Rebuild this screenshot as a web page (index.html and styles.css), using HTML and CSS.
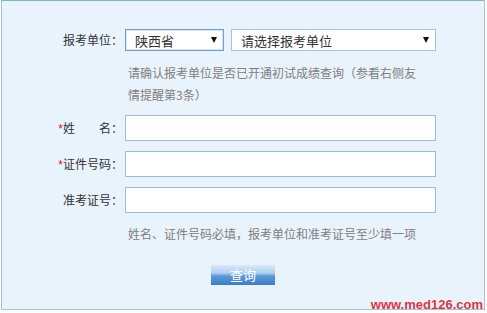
FILE: index.html
```html
<!DOCTYPE html>
<html lang="zh-CN">
<head>
  <meta charset="UTF-8">
  <title>成绩查询</title>
  <link rel="stylesheet" href="styles.css">
</head>
<body>
  <div class="box">
    <form class="query">
      <div class="row row-unit">
        <label class="label">报考单位：</label>
        <div class="field">
          <span class="sel sel-prov">
            <select>
              <option>陕西省</option>
            </select>
          </span>
          <span class="sel sel-unit">
            <select>
              <option>请选择报考单位</option>
            </select>
          </span>
        </div>
      </div>
      <p class="tip tip-unit">请确认报考单位是否已开通初试成绩查询（参看右侧友情提醒第3条）</p>

      <div class="row">
        <label class="label"><em>*</em>姓　　名：</label>
        <input class="text" type="text">
      </div>
      <div class="row">
        <label class="label"><em>*</em>证件号码：</label>
        <input class="text" type="text">
      </div>
      <div class="row">
        <label class="label">准考证号：</label>
        <input class="text" type="text">
      </div>
      <p class="tip tip-need">姓名、证件号码必填，报考单位和准考证号至少填一项</p>

      <div class="actions">
        <button type="button" class="btn">查询</button>
      </div>
    </form>
    <span class="mark">www.med126.com</span>
  </div>
</body>
</html>
```

FILE: styles.css
```css
body { margin: 0; font-family: "Noto Sans CJK SC", "Liberation Sans", sans-serif; font-size: 12px; color: #333; background: #fff; }

.box { position: relative; box-sizing: border-box; width: 484px; height: 310px; margin-left: 1px; padding-top: 28px; background: #e9f3fc; border: 1px solid #a3c3df; border-top-color: #86afd6; }

.query { margin: 0; }
.row { display: flex; align-items: center; height: 26px; margin-bottom: 10px; }
.row-unit { height: 22px; margin-bottom: 0; }
.label { width: 121px; flex: none; text-align: right; margin-right: 2px; line-height: 18px; white-space: pre; }
.label em { font-style: normal; color: #e0141e; font-family: "Liberation Sans", sans-serif; }

.field { display: flex; gap: 7px; }
.sel { position: relative; display: block; }
.sel select { display: block; box-sizing: border-box; height: 22px; padding: 0 0 0 9px; margin: 0; font-family: inherit; font-size: 13px; color: #333; background: #fff; border: 1px solid #a8c2da; border-radius: 0; appearance: none; -webkit-appearance: none; outline: none; }
.sel-prov select { width: 99px; border-color: #6f9fd6; box-shadow: inset 0 0 0 1px #d3e5f6; }
.sel-unit select { width: 205px; }
.sel::after { content: ""; position: absolute; right: 7px; top: 8px; border-left: 3px solid transparent; border-right: 3px solid transparent; border-top: 6px solid #111; pointer-events: none; }

.tip { width: 295px; margin: 0 0 0 126px; line-height: 22px; color: #808080; }
.tip-unit { margin-top: 11px; margin-bottom: 9px; }
.tip-need { margin-top: 0; margin-bottom: 20px; }

.text { box-sizing: border-box; width: 311px; height: 26px; margin: 0; padding: 0 4px; background: #fff; border: 1px solid #92bfe0; border-radius: 0; outline: none; font-family: inherit; font-size: 13px; }

.actions { display: flex; justify-content: center; }
.btn { width: 64px; height: 20px; padding: 0; border: 0; border-radius: 0; color: #fff; font-family: inherit; font-size: 13px; line-height: 20px; background: linear-gradient(to bottom, #d9eaf9 0%, #aed0f0 40%, #5c99da 55%, #3c7dc7 100%); cursor: pointer; }

.mark { position: absolute; right: 1px; bottom: -3px; font-family: "Liberation Sans", Arial, sans-serif; font-weight: bold; font-size: 13px; line-height: 15px; color: #e2343c; }
```
